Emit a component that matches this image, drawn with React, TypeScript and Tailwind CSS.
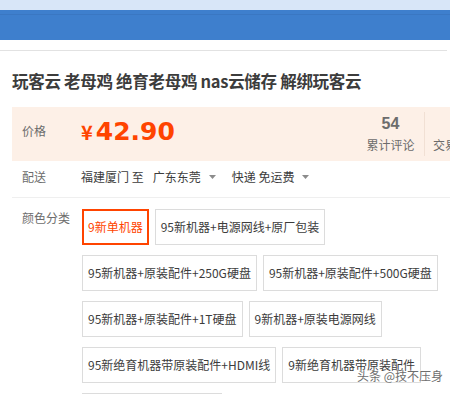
const skus = [
  "9新单机器",
  "95新机器+电源网线+原厂包装",
  "95新机器+原装配件+250G硬盘",
  "95新机器+原装配件+500G硬盘",
  "95新机器+原装配件+1T硬盘",
  "9新机器+原装电源网线",
  "95新绝育机器带原装配件+HDMI线",
  "9新绝育机器带原装配件",
  "95新绝育机器+原装配件",
];

function Caret() {
  return (
    <svg width="7" height="4" viewBox="0 0 7 4" className="mx-[8px]">
      <path d="M0 0h7L3.5 4z" fill="#8c8c8c" />
    </svg>
  );
}

export default function App() {
  const font = { fontFamily: '"Noto Sans CJK SC", "Liberation Sans", sans-serif' };
  return (
    <div className="relative w-[450px] h-[394px] overflow-hidden bg-white text-[#3c3c3c]" style={font}>
      <div className="h-[10px] bg-[#d8e6f8]" />
      <div className="h-[30px] bg-[#3e7fcd]">
        <div className="h-[4px]" />
        <div className="h-px bg-[#3a77c2]" />
      </div>
      <div className="h-[10px]" />
      <div className="h-px bg-[#e2e2e2] mr-[3px]" />

      <div className="h-[56px] flex items-center pl-[12px] pt-[4px]">
        <h1 className="text-[16.5px] font-bold tracking-[-0.3px] whitespace-nowrap text-[#3c3c3c]">
          玩客云 老母鸡 绝育老母鸡 nas云储存 解绑玩客云
        </h1>
      </div>

      <div className="ml-[12px] w-[500px] h-[54px] bg-[#fdf0e7] flex">
        <div className="w-[69px] pl-[10px] pt-[16px] text-[12px] leading-[16px] text-[#6c6c6c]">价格</div>
        <div className="w-[276px] pt-[10px] flex items-baseline text-[#ff4400] font-bold">
          <span className="text-[20px] mr-[3px]" style={{ fontFamily: '"Noto Sans CJK SC", sans-serif' }}>¥</span>
          <span className="text-[25px] leading-[30px]" style={{ fontFamily: '"DejaVu Sans", sans-serif' }}>42.90</span>
        </div>
        <div className="w-[67px] flex flex-col items-center pt-[8px]">
          <span className="text-[16px] leading-[18px] font-bold text-[#6c6c6c]" style={{ fontFamily: '"Liberation Sans", sans-serif' }}>54</span>
          <span className="text-[12px] leading-[16px] mt-[4px] text-[#6c6c6c]">累计评论</span>
        </div>
        <div className="my-[5px] w-px bg-[#f1e0d4]" />
        <div className="flex flex-col items-center pl-[8px] pt-[8px]">
          <span className="text-[16px] leading-[18px] font-bold text-[#6c6c6c]" style={{ fontFamily: '"Liberation Sans", sans-serif' }}>&nbsp;</span>
          <span className="text-[12px] leading-[16px] mt-[4px] text-[#6c6c6c] whitespace-nowrap">交易成功</span>
        </div>
      </div>

      <div className="ml-[12px] h-[37px] border-b border-[#efefef] flex items-start pt-[8px] text-[12px] leading-[16px]">
        <div className="w-[69px] pl-[10px] text-[#6c6c6c]">配送</div>
        <div className="h-[16px] flex items-center whitespace-nowrap">
          <span>福建厦门 至</span>
          <span className="ml-[9px]">广东东莞</span>
          <Caret />
          <span className="ml-[8px]">快递 免运费</span>
          <Caret />
        </div>
      </div>

      <div className="ml-[12px] flex pt-[11px]">
        <div className="w-[70px] shrink-0 pl-[10px] pt-[1px] text-[12px] leading-[16px] text-[#6c6c6c]">颜色分类</div>
        <div className="flex flex-wrap gap-x-[6px] gap-y-[10px] w-[370px]">
          {skus.map((s, i) => (
            <div
              key={s}
              className={
                i === 0
                  ? "h-[36px] px-[4px] border-2 border-[#ff4400] text-[#ff4400] text-[12px] flex items-center whitespace-nowrap"
                  : "h-[36px] px-[5px] border border-[#dcdcdc] text-[12px] flex items-center whitespace-nowrap"
              }
            >
              {s}
            </div>
          ))}
        </div>
      </div>

      <div
        className="absolute left-[357px] top-[368px] text-[12px] leading-[16px] text-[#6e6e6e] whitespace-nowrap"
        style={{ textShadow: "0 0 2px #fff, 0 0 2px #fff" }}
      >
        头条 @技不压身
      </div>
    </div>
  );
}
